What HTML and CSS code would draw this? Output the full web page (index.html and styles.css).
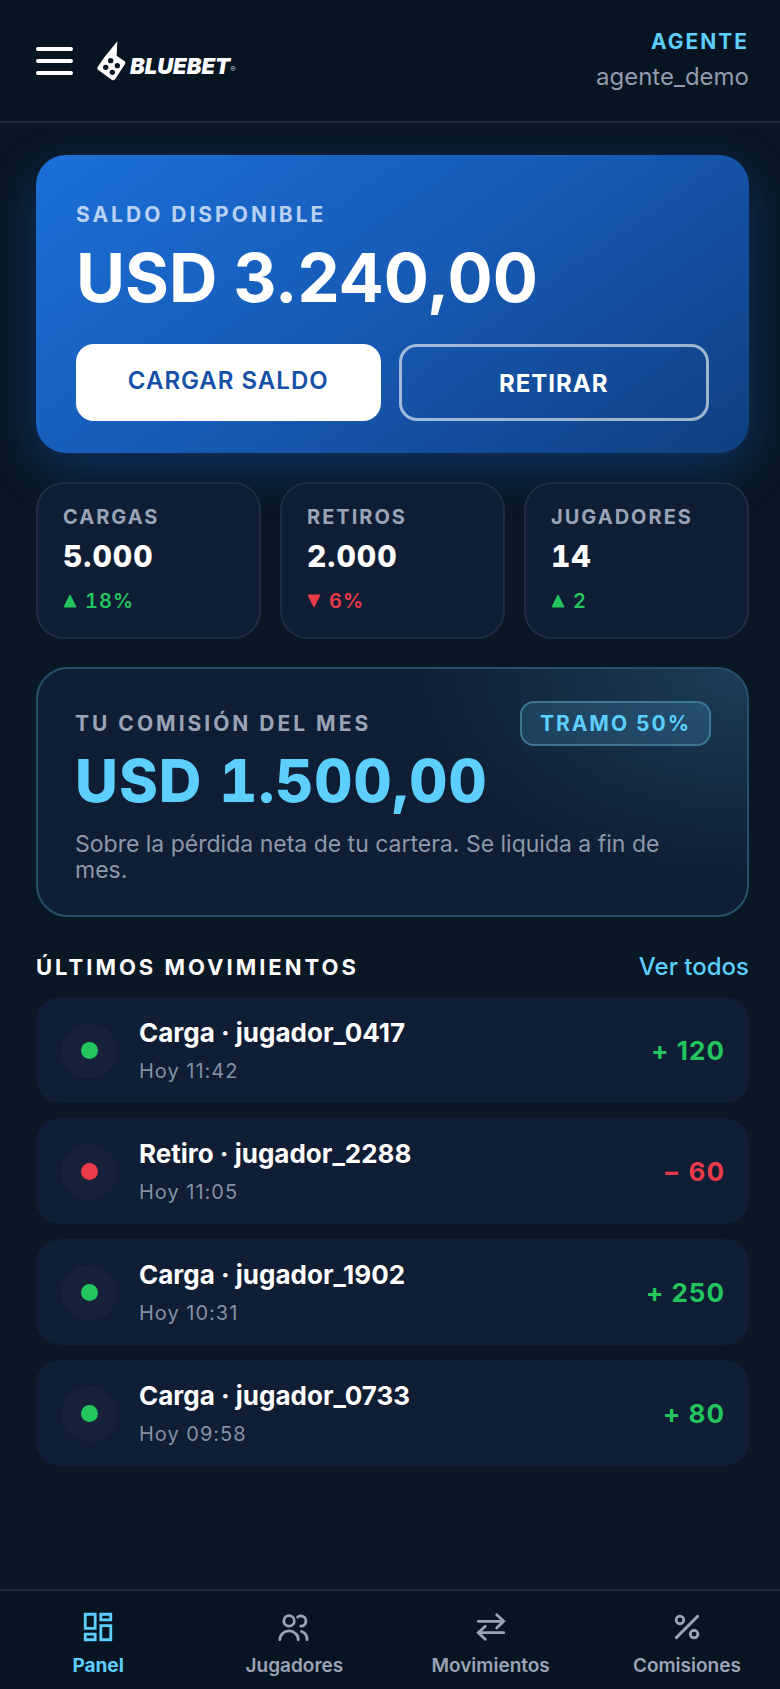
FILE: index.html
```html
<!DOCTYPE html>
<html lang="es">

<head>
    <meta charset="UTF-8">
    <meta name="viewport" content="width=device-width, initial-scale=1.0">
    <title>Bluebet - Panel de agente</title>
    <link rel="stylesheet" href="styles.css">
</head>

<body>

    <header class="topbar">
        <div class="topbar-left">
            <button type="button" class="menu-btn" aria-label="Abrir menú">
                <svg width="37" height="30" viewBox="0 0 37 30">
                    <path d="M2 3h33M2 15h33M2 27h33" />
                </svg>
            </button>
            <a href="#" class="logo">
                <svg width="29" height="40" viewBox="0 0 87 120" aria-hidden="true">
                    <path class="die" d="M61 1 59 44 82 60Q87 64 84 69L55 114Q50 120 44 116L4 87Q-1 83 2 78L22 49Z" />
                    <circle cx="41" cy="59" r="8" />
                    <circle cx="61" cy="74" r="8" />
                    <circle cx="26" cy="79" r="8" />
                    <circle cx="46" cy="94" r="8" />
                </svg>
                <span class="wordmark">BLUEBET</span><span class="reg">®</span>
            </a>
        </div>
        <div class="user">
            <span class="role">AGENTE</span>
            <span class="username">agente_demo</span>
        </div>
    </header>

    <main>
        <section class="balance">
            <h2 class="label">SALDO DISPONIBLE</h2>
            <p class="balance-amount">USD 3.240,00</p>
            <div class="actions">
                <button type="button" class="btn btn-primary">CARGAR SALDO</button>
                <button type="button" class="btn btn-outline">RETIRAR</button>
            </div>
        </section>

        <section class="stats">
            <div class="stat">
                <h3>CARGAS</h3>
                <p class="stat-value">5.000</p>
                <p class="delta up">
                    <svg width="14" height="14" viewBox="0 0 14 14"><path d="M7 1 13 13H1Z" /></svg>
                    18%
                </p>
            </div>
            <div class="stat">
                <h3>RETIROS</h3>
                <p class="stat-value">2.000</p>
                <p class="delta down">
                    <svg width="14" height="14" viewBox="0 0 14 14"><path d="M7 13 1 1h12Z" /></svg>
                    6%
                </p>
            </div>
            <div class="stat">
                <h3>JUGADORES</h3>
                <p class="stat-value">14</p>
                <p class="delta up">
                    <svg width="14" height="14" viewBox="0 0 14 14"><path d="M7 1 13 13H1Z" /></svg>
                    2
                </p>
            </div>
        </section>

        <section class="commission">
            <div class="commission-head">
                <h2 class="label">TU COMISIÓN DEL MES</h2>
                <span class="badge">TRAMO 50%</span>
            </div>
            <p class="commission-amount">USD 1.500,00</p>
            <p class="commission-note">Sobre la pérdida neta de tu cartera. Se liquida a fin de mes.</p>
        </section>

        <div class="list-head">
            <h2>ÚLTIMOS MOVIMIENTOS</h2>
            <a href="#">Ver todos</a>
        </div>

        <ul class="moves">
            <li class="move up">
                <span class="dot"></span>
                <div class="move-text">
                    <p class="move-name">Carga · jugador_0417</p>
                    <p class="move-time">Hoy 11:42</p>
                </div>
                <span class="move-amount">+ 120</span>
            </li>
            <li class="move down">
                <span class="dot"></span>
                <div class="move-text">
                    <p class="move-name">Retiro · jugador_2288</p>
                    <p class="move-time">Hoy 11:05</p>
                </div>
                <span class="move-amount">− 60</span>
            </li>
            <li class="move up">
                <span class="dot"></span>
                <div class="move-text">
                    <p class="move-name">Carga · jugador_1902</p>
                    <p class="move-time">Hoy 10:31</p>
                </div>
                <span class="move-amount">+ 250</span>
            </li>
            <li class="move up">
                <span class="dot"></span>
                <div class="move-text">
                    <p class="move-name">Carga · jugador_0733</p>
                    <p class="move-time">Hoy 09:58</p>
                </div>
                <span class="move-amount">+ 80</span>
            </li>
        </ul>
    </main>

    <nav class="tabbar">
        <a href="#" class="tab active">
            <svg width="34" height="34" viewBox="0 0 24 24">
                <path d="M3 3h7v10H3zM3 17h7v4H3zM14 3h7v4h-7zM14 11h7v10h-7z" />
            </svg>
            Panel
        </a>
        <a href="#" class="tab">
            <svg width="34" height="34" viewBox="0 0 24 24">
                <circle cx="8.5" cy="7.7" r="3.7" />
                <path d="M2 21a6.5 6.3 0 0 1 13 0M14.6 5a3.6 3.6 0 1 1 2.2 6.4M17.3 15.2a5.8 6 0 0 1 3.9 5.8" />
            </svg>
            Jugadores
        </a>
        <a href="#" class="tab">
            <svg width="34" height="34" viewBox="0 0 24 24">
                <path d="M3 8h18M16 3.3 21 8l-5 4.7M21 16H3M8 11.5 3 16l5 4.7" />
            </svg>
            Movimientos
        </a>
        <a href="#" class="tab">
            <svg width="34" height="34" viewBox="0 0 24 24">
                <path d="M4.5 19.5l15-15" />
                <circle cx="7" cy="7" r="2.7" />
                <circle cx="17" cy="17" r="2.7" />
            </svg>
            Comisiones
        </a>
    </nav>

</body>

</html>
```

FILE: styles.css
```css
* {
    margin: 0;
    padding: 0;
}

body {
    display: flex;
    flex-direction: column;
    min-height: 100vh;
    overflow-x: hidden;
    background-color: #0a1725;
    color: #ffffff;
    font-family: Inter, "Liberation Sans", sans-serif;
}

a {
    color: inherit;
    text-decoration: none;
}

button {
    font-family: inherit;
    cursor: pointer;
}

/* Header */
.topbar {
    position: relative;
    z-index: 1;
    display: flex;
    justify-content: space-between;
    align-items: center;
    padding: 30px 31px 29px 36px;
    background-color: #071422;
    border-bottom: 2px solid #1d2b42;
}

.topbar-left {
    display: flex;
    align-items: center;
    gap: 24px;
}

.menu-btn {
    display: flex;
    background: none;
    border: none;
}

.menu-btn svg {
    fill: none;
    stroke: #ffffff;
    stroke-width: 4;
    stroke-linecap: round;
}

.logo {
    display: flex;
    align-items: center;
}

.logo .die {
    fill: #ffffff;
}

.logo circle {
    fill: #071422;
}

.wordmark {
    margin: 9px 0 0 4px;
    font-size: 22px;
    line-height: 24px;
    font-weight: 900;
    font-style: italic;
}

.reg {
    margin-top: 16px;
    font-size: 8px;
    line-height: 12px;
    color: #b8c0cc;
}

.user {
    display: flex;
    flex-direction: column;
    align-items: flex-end;
    gap: 8px;
}

.role {
    font-size: 21px;
    line-height: 24px;
    font-weight: 700;
    letter-spacing: 2px;
    color: #5ccfff;
}

.username {
    font-size: 24px;
    line-height: 30px;
    color: #929cac;
}

main {
    padding: 32px 31px 40px 36px;
}

.label {
    font-size: 21px;
    line-height: 24px;
    font-weight: 700;
    letter-spacing: 3px;
    color: #9aa4b5;
}

/* Balance */
.balance {
    padding: 48px 40px 32px;
    border-radius: 30px;
    background: linear-gradient(145deg, #1c70d8 0%, #165ab4 50%, #103f80 100%);
    box-shadow: 0 16px 48px rgba(24, 100, 200, 0.35);
}

.balance .label {
    color: #b9d2f3;
}

.balance-amount {
    margin-top: 11px;
    font-size: 67px;
    line-height: 80px;
    font-weight: 700;
}

.actions {
    display: flex;
    gap: 18px;
    margin-top: 26px;
}

.btn {
    box-sizing: content-box;
    flex: 1;
    padding-top: 2px;
    border-radius: 18px;
    font-size: 24px;
    line-height: 69px;
    letter-spacing: 1px;
}

.btn-primary {
    padding-bottom: 6px;
    border: none;
    background-color: #ffffff;
    color: #1550a8;
    font-weight: 600;
}

.btn-outline {
    border: 3px solid rgba(255, 255, 255, 0.6);
    background: none;
    color: #ffffff;
    font-weight: 700;
}

/* Stats */
.stats {
    display: grid;
    grid-template-columns: repeat(3, 1fr);
    gap: 19px;
    margin-top: 29px;
}

.stat {
    padding: 22px 25px 24px;
    border: 2px solid #1e2d44;
    border-radius: 28px;
    background-color: #0f1e35;
}

.stat h3 {
    font-size: 20px;
    line-height: 22px;
    font-weight: 700;
    letter-spacing: 2px;
    color: #9aa4b5;
}

.stat-value {
    margin-top: 10px;
    font-size: 30px;
    line-height: 36px;
    font-weight: 800;
    letter-spacing: 1px;
    font-variant-numeric: tabular-nums;
}

.delta {
    display: flex;
    align-items: center;
    gap: 8px;
    margin-top: 15px;
    font-size: 20px;
    line-height: 24px;
    font-weight: 600;
    letter-spacing: 1px;
    font-variant-numeric: tabular-nums;
}

.delta svg {
    fill: currentColor;
    stroke: currentColor;
    stroke-width: 1;
    stroke-linejoin: round;
}

.up {
    color: #22c55e;
}

.down {
    color: #eb3b48;
}

/* Commission */
.commission {
    margin-top: 28px;
    padding: 32px 36px 32px 37px;
    border: 2px solid #265069;
    border-radius: 32px;
    background: radial-gradient(340px 210px at 100% 0, rgba(92, 207, 255, 0.18), rgba(92, 207, 255, 0)) #0f1e35;
}

.commission-head {
    display: flex;
    justify-content: space-between;
    align-items: center;
}

.badge {
    padding: 9px 18px 8px;
    border: 2px solid #3b7693;
    border-radius: 14px;
    background-color: rgba(92, 207, 255, 0.16);
    font-size: 21px;
    line-height: 24px;
    font-weight: 700;
    letter-spacing: 2px;
    color: #5ccfff;
}

.commission-amount {
    margin-top: 3px;
    font-size: 59px;
    line-height: 64px;
    font-weight: 800;
    letter-spacing: 1px;
    color: #5ccfff;
    font-variant-numeric: tabular-nums;
}

.commission-note {
    margin-top: 18px;
    font-size: 23px;
    line-height: 26px;
    color: #8e98a8;
}

/* Movements */
.list-head {
    display: flex;
    justify-content: space-between;
    align-items: center;
    margin: 36px 0 16px;
    line-height: 28px;
}

.list-head h2 {
    font-size: 22px;
    font-weight: 700;
    letter-spacing: 3px;
}

.list-head a {
    font-size: 24px;
    font-weight: 500;
    color: #5ccfff;
}

.moves {
    display: flex;
    flex-direction: column;
    gap: 15px;
    list-style: none;
}

.move {
    display: flex;
    align-items: center;
    gap: 22px;
    padding: 20px 24px 19px 25px;
    border-radius: 24px;
    background-color: #0f1e35;
}

.dot {
    display: grid;
    place-items: center;
    width: 56px;
    height: 56px;
    border-radius: 50%;
    background-color: #17213a;
}

.dot::before {
    content: "";
    width: 17px;
    height: 17px;
    border-radius: 50%;
    background-color: currentColor;
}

.move-text {
    flex: 1;
}

.move-name {
    font-size: 26px;
    line-height: 32px;
    font-weight: 700;
    color: #ffffff;
}

.move-time {
    margin-top: 9px;
    font-size: 20px;
    line-height: 26px;
    letter-spacing: 1px;
    color: #8490a2;
}

.move-amount {
    font-size: 26px;
    line-height: 32px;
    font-weight: 700;
    letter-spacing: 1px;
}

/* Bottom navigation */
.tabbar {
    display: grid;
    grid-template-columns: repeat(4, 1fr);
    margin: auto -5px 0 0;
    background-color: #071422;
    border-top: 2px solid #1d2b42;
}

.tab {
    display: flex;
    flex-direction: column;
    align-items: center;
    gap: 10px;
    padding: 19px 0 11px;
    font-size: 19px;
    line-height: 24px;
    font-weight: 600;
    color: #9aa4b5;
}

.tab svg {
    fill: none;
    stroke: currentColor;
    stroke-width: 2;
    stroke-linecap: round;
}

.tab.active {
    font-weight: 700;
    color: #5ccfff;
}
```
